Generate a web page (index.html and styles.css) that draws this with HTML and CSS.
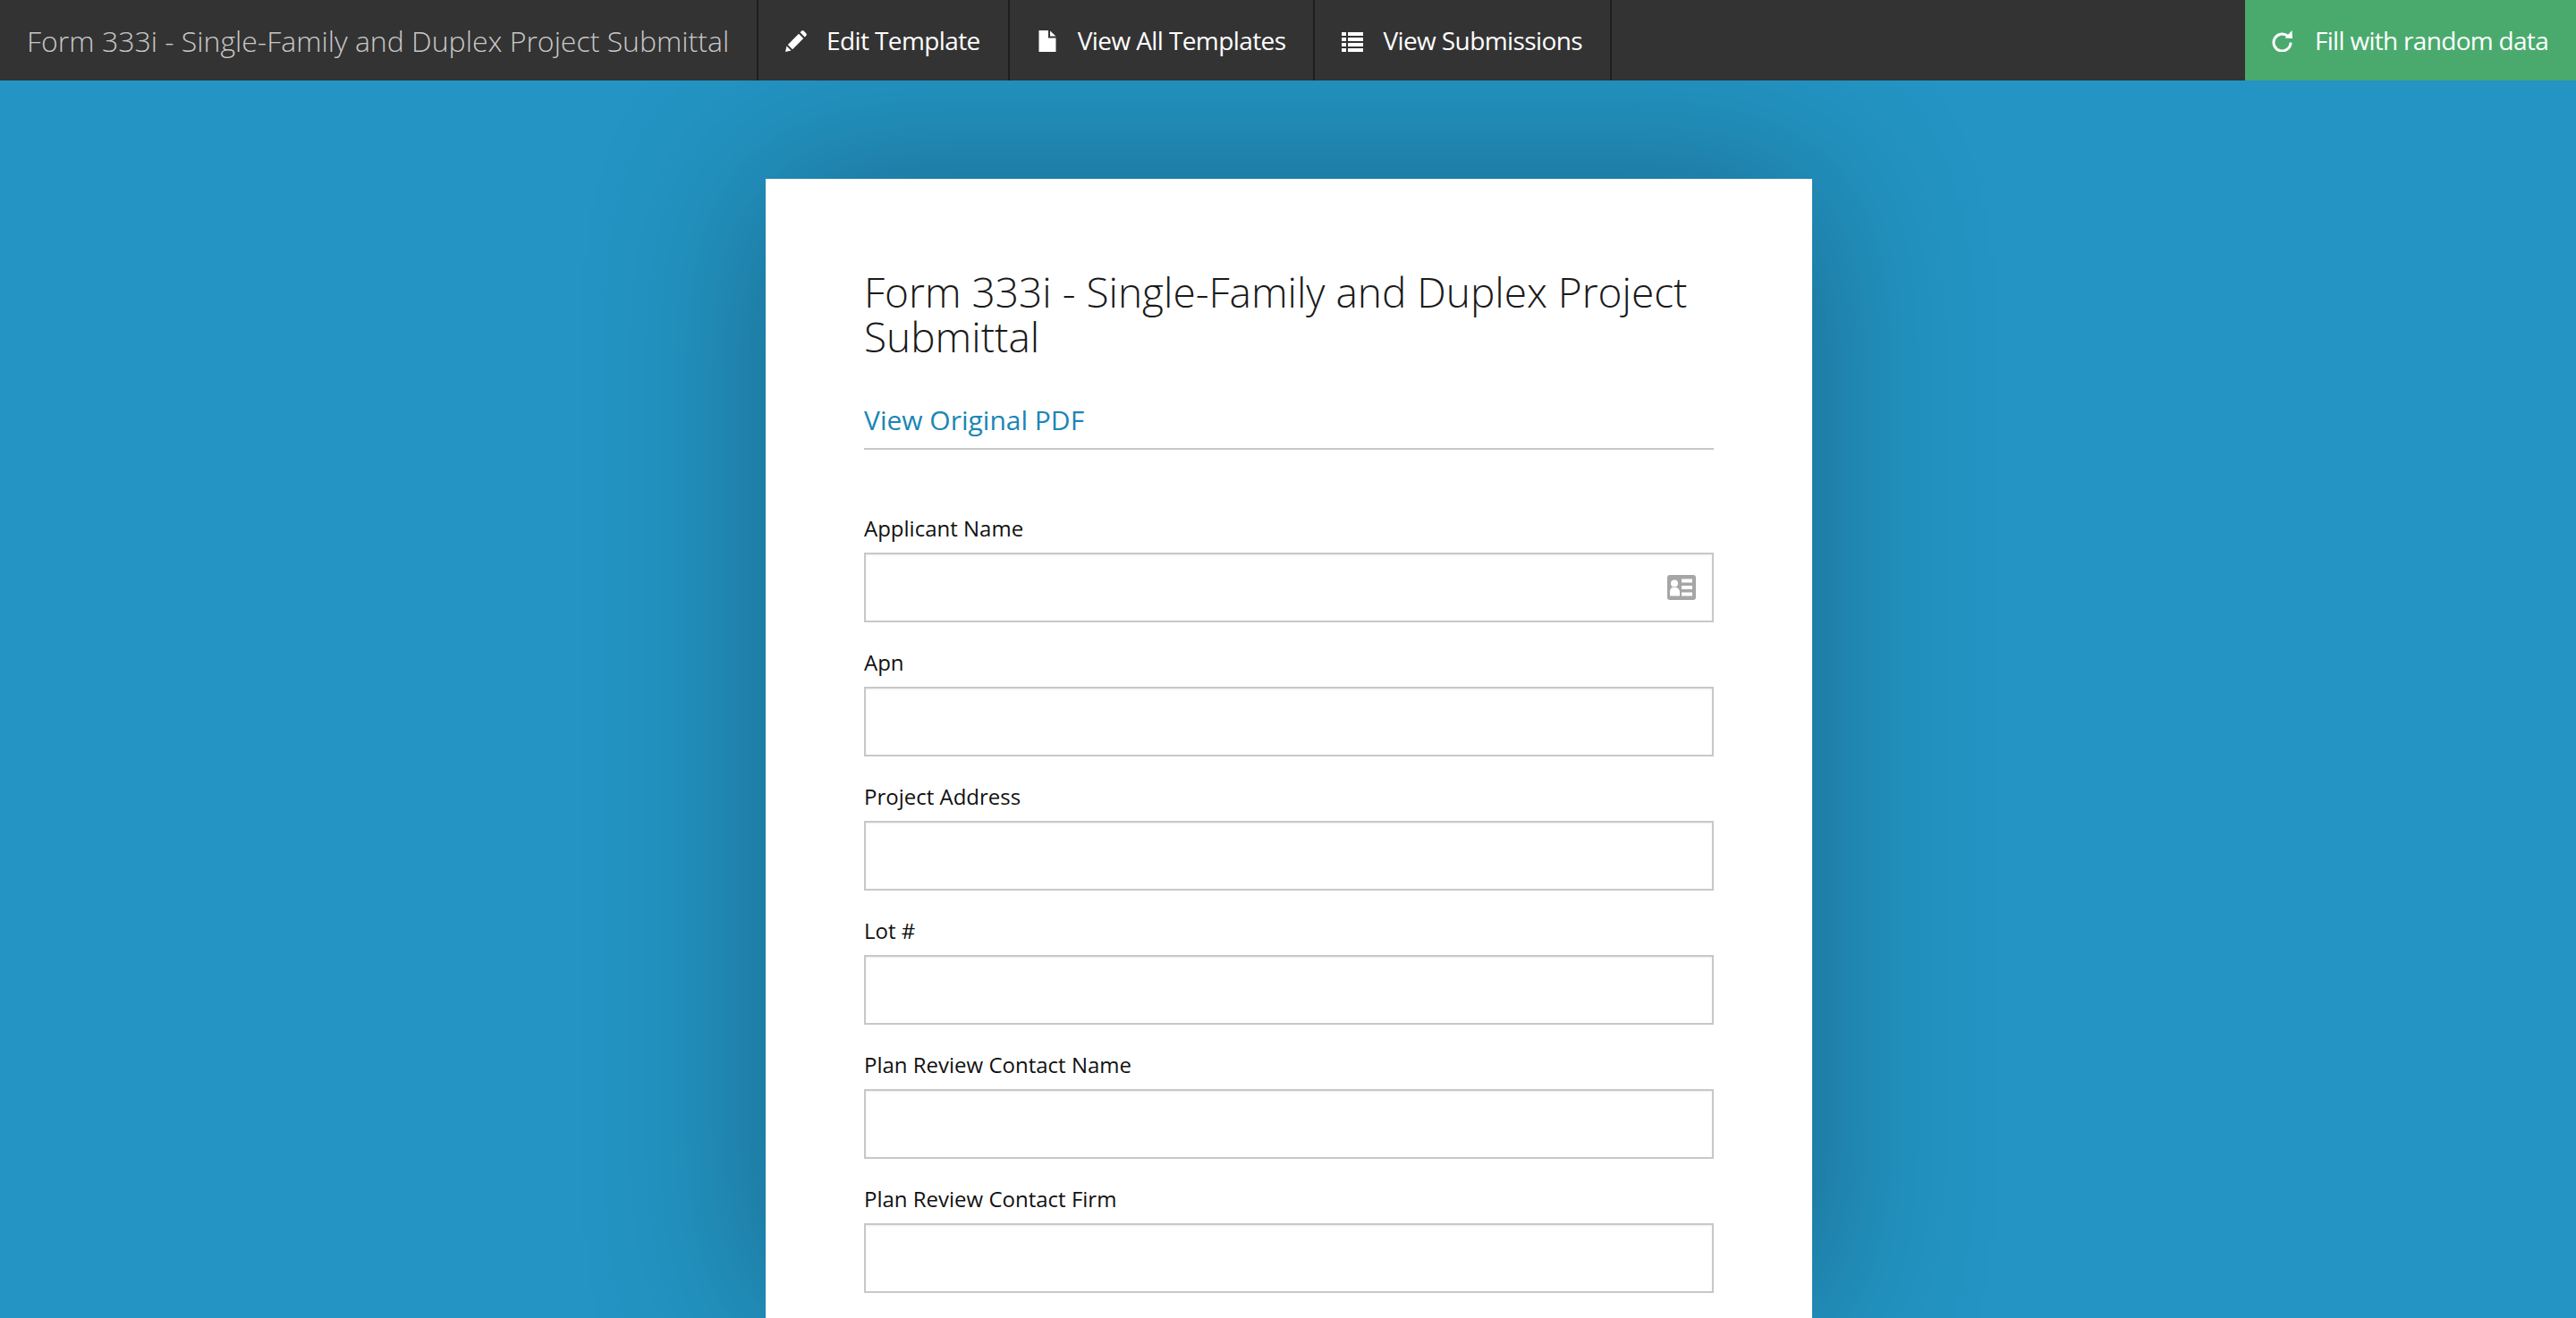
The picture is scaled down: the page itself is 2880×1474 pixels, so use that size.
FILE: index.html
```html
<!DOCTYPE html>
<html lang="en">
<head>
<meta charset="utf-8">
<title>Form 333i - Single-Family and Duplex Project Submittal</title>
<link rel="stylesheet" href="styles.css">
</head>
<body>
<nav class="topbar">
  <a class="brand">Form 333i - Single-Family and Duplex Project Submittal</a>
  <a class="nav-item">
    <svg class="icon" viewBox="0 0 24 24"><path d="M0 24 1.500 17.500 6.500 22.500z"/><path d="M2.800 16 15 3.800 20.200 9 8 21.200z"/><path d="M16.500 2.300 18 .8a2 2 0 0 1 2.800 0l2.400 2.400a2 2 0 0 1 0 2.800l-1.500 1.500z"/></svg>
    Edit Template</a>
  <a class="nav-item">
    <svg class="icon" viewBox="0 0 24 24"><path d="M2.500 0H13v8.500h8.500V24H2.500z"/><path d="M15 .5 21.500 6.500H15z"/></svg>
    View All Templates</a>
  <a class="nav-item">
    <svg class="icon" viewBox="0 0 24 24"><rect x="0" y="2" width="5" height="4"/><rect x="7" y="2" width="17" height="4"/><rect x="0" y="8" width="5" height="4"/><rect x="7" y="8" width="17" height="4"/><rect x="0" y="14" width="5" height="4"/><rect x="7" y="14" width="17" height="4"/><rect x="0" y="20" width="5" height="4"/><rect x="7" y="20" width="17" height="4"/></svg>
    View Submissions</a>
  <a class="nav-action">
    <svg class="icon" viewBox="0 0 24 24"><path class="ring" d="M21 13.500A9.500 9.500 0 1 1 17.600 6.200"/><path d="M22.500 0 23 9 14.500 8.500z"/></svg>
    Fill with random data</a>
</nav>
<main class="stage">
  <section class="card">
    <h1 class="title">Form 333i - Single-Family and Duplex Project Submittal</h1>
    <div class="pdf-row"><a class="pdf-link">View Original PDF</a></div>
    <form class="fields">
      <div class="field">
        <label class="label">Applicant Name</label>
        <div class="input with-icon">
          <svg class="card-icon" viewBox="0 0 32 28"><path fill-rule="evenodd" d="M3 0h26a3 3 0 0 1 3 3v22a3 3 0 0 1-3 3H3a3 3 0 0 1-3-3V3a3 3 0 0 1 3-3zM8 5.500a4 4 0 1 0 0 8 4 4 0 0 0 0-8zM3 23.500h11V19c0-2.500-2-4.500-3.500-5h-5C4 14.500 3 16.500 3 19zM16 4.500v4h12v-4zM16 12v4h12v-4zM16 19.500v4h12v-4z"/></svg>
        </div>
      </div>
      <div class="field"><label class="label">Apn</label><div class="input"></div></div>
      <div class="field"><label class="label">Project Address</label><div class="input"></div></div>
      <div class="field"><label class="label">Lot #</label><div class="input"></div></div>
      <div class="field"><label class="label">Plan Review Contact Name</label><div class="input"></div></div>
      <div class="field"><label class="label">Plan Review Contact Firm</label><div class="input"></div></div>
    </form>
  </section>
</main>
</body>
</html>
```
FILE: styles.css
```css
* { box-sizing: border-box; }
html, body { margin: 0; height: 100%; }
body {
  height: 1474px;
  overflow: hidden;
  background: #2394c3;
  font-family: "Open Sans", sans-serif;
  display: flex;
  flex-direction: column;
}
.topbar {
  flex: none;
  display: flex;
  height: 90px;
  background: #333;
  position: relative;
  z-index: 2;
}
.brand {
  padding: 0 30px;
  width: 848px;
  border-right: 2px solid #1e1e1e;
  display: flex;
  align-items: center;
  font-weight: 300;
  font-size: 32px;
  color: #c8c8c8;
  white-space: nowrap;
}
.nav-item {
  display: flex;
  align-items: center;
  gap: 22px;
  padding: 0 31px 0 30px;
  border-right: 2px solid #1e1e1e;
  font-size: 28px;
  letter-spacing: -.6px;
  color: #fff;
  white-space: nowrap;
}
.nav-action {
  margin-left: auto;
  display: flex;
  align-items: center;
  gap: 24px;
  padding: 0 30px;
  width: 370px;
  background: #4aaa6e;
  font-size: 28px;
  letter-spacing: -.7px;
  color: #fff;
  white-space: nowrap;
}
.icon { width: 24px; height: 24px; fill: #fff; flex: none; margin-top: 2px; }
.ring { fill: none; stroke: #fff; stroke-width: 3; }
.stage {
  flex: 1;
  min-height: 0;
  display: flex;
  justify-content: center;
  padding: 110px 0 0 2px;
}
.card {
  width: 1170px;
  height: 100%;
  overflow: hidden;
  background: #fff;
  padding: 101px 110px 0;
  box-shadow: 0 0 180px rgba(0, 0, 0, .3);
}
.title {
  margin: 0;
  font-weight: 300;
  font-size: 46px;
  line-height: 50px;
  color: #1a1a1a;
}
.pdf-row {
  margin-top: 47px;
  padding-bottom: 9px;
  border-bottom: 2px solid #c8c8c8;
}
.pdf-link { font-size: 30px; line-height: 44px; color: #1a86b5; }
.fields { margin-top: 71px; display: flex; flex-direction: column; gap: 28px; }
.label {
  display: block;
  font-size: 24px;
  line-height: 34px;
  margin-bottom: 10px;
  color: #111;
}
.input {
  height: 78px;
  border: 2px solid #c8c8c8;
  box-shadow: inset 0 1px 2px rgba(0, 0, 0, .08);
  background: #fff;
}
.with-icon { display: flex; align-items: center; justify-content: flex-end; padding-right: 18px; }
.card-icon { width: 32px; height: 28px; fill: #a6a6a6; }
```
